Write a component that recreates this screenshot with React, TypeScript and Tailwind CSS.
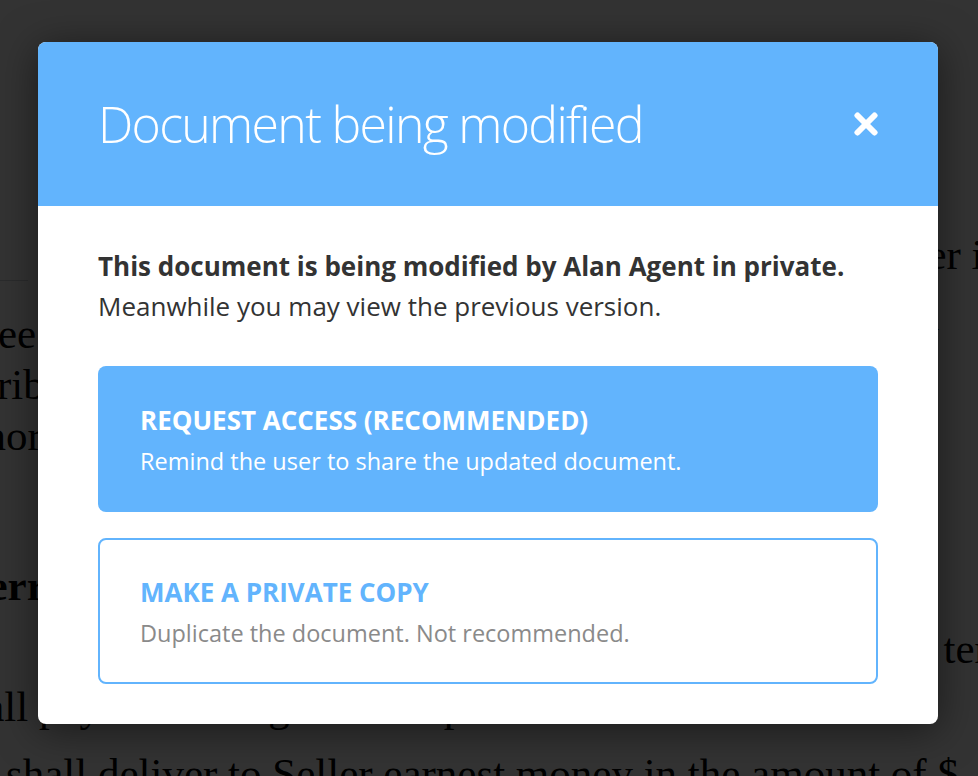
const docFont = { fontFamily: '"Liberation Serif", "Times New Roman", serif' }

function CloseIcon() {
  return (
    <svg viewBox="0 0 24 24" className="h-6 w-6" fill="none" stroke="white" strokeWidth={6} strokeLinecap="round">
      <path d="M3.5 3.5 L20.5 20.5" />
      <path d="M20.5 3.5 L3.5 20.5" />
    </svg>
  )
}

function OptionCard({
  title,
  text,
  primary = false,
}: {
  title: string
  text: string
  primary?: boolean
}) {
  return (
    <div
      role="button"
      tabIndex={0}
      className={`h-[146px] rounded-lg cursor-pointer ${
        primary
          ? 'bg-[#62b4fd] pl-[42px] pr-8 pt-[38px]'
          : 'bg-white border-2 border-[#62b4fd] pl-[40px] pr-8 pt-[36px]'
      }`}
    >
      <div className={`text-[26px] leading-[32px] font-bold ${primary ? 'text-white' : 'text-[#62b4fd]'}`}>
        {title}
      </div>
      <div className={`mt-[10px] text-[23.5px] leading-[30px] ${primary ? 'text-white' : 'text-[#8a8a8a]'}`}>
        {text}
      </div>
    </div>
  )
}

export default function App() {
  return (
    <div className="relative h-[776px] w-[978px] overflow-hidden bg-white">
      {/* document behind the dialog */}
      <div className="text-[43px] leading-[51px] text-black whitespace-nowrap pt-[229px]" style={docFont}>
        <div className="flex justify-end -mr-[27px]">
          <span className="shrink-0">between the Buyer and the Seller in</span>
        </div>
        <div className="w-[28px] h-px bg-gray-300" />
        <p className="mt-[27px] -ml-[57px]">agree that the Property shall be conveyed as set out below</p>
        <p className="-ml-[58px]">ascribed to such terms in the Purchase Agreement and</p>
        <p className="-ml-[68px]">Honor all covenants herein before the Closing Date</p>
        <p className="mt-[99px] -ml-[76px] font-bold">Deferred Earnest Money</p>
        <div className="mt-[12px] flex justify-end -mr-[61px]">
          <span className="shrink-0">Buyer and Seller agree to the terms</span>
        </div>
        <p className="mt-[7px] -ml-[53px]">shall pay all closing costs as provided herein</p>
        <p className="mt-[16px] ml-[6px]">shall deliver to Seller earnest money in the amount of $</p>
      </div>

      {/* overlay */}
      <div className="absolute inset-0 bg-black/80" />

      {/* dialog */}
      <div
        className="absolute left-[38px] top-[42px] w-[900px] rounded-lg bg-white overflow-hidden shadow-[0_6px_40px_rgba(0,0,0,0.5)]"
        style={{ fontFamily: '"Open Sans", "Noto Sans", sans-serif' }}
      >
        <div className="h-[164px] bg-[#62b4fd] flex items-center justify-between pl-[60px] pr-[60px]">
          <h1 className="text-[50px] leading-none font-light text-white tracking-[-1.7px]">Document being modified</h1>
          <CloseIcon />
        </div>

        <div className="px-[60px] pt-[40px] pb-[40px]">
          <p className="text-[26px] leading-[40px] text-[#333]">
            <span className="font-bold">This document is being modified by Alan Agent in private.</span>
            <br />
            Meanwhile you may view the previous version.
          </p>

          <div className="mt-[40px] flex flex-col gap-[26px]">
            <OptionCard primary title="REQUEST ACCESS (RECOMMENDED)" text="Remind the user to share the updated document." />
            <OptionCard title="MAKE A PRIVATE COPY" text="Duplicate the document. Not recommended." />
          </div>
        </div>
      </div>
    </div>
  )
}
